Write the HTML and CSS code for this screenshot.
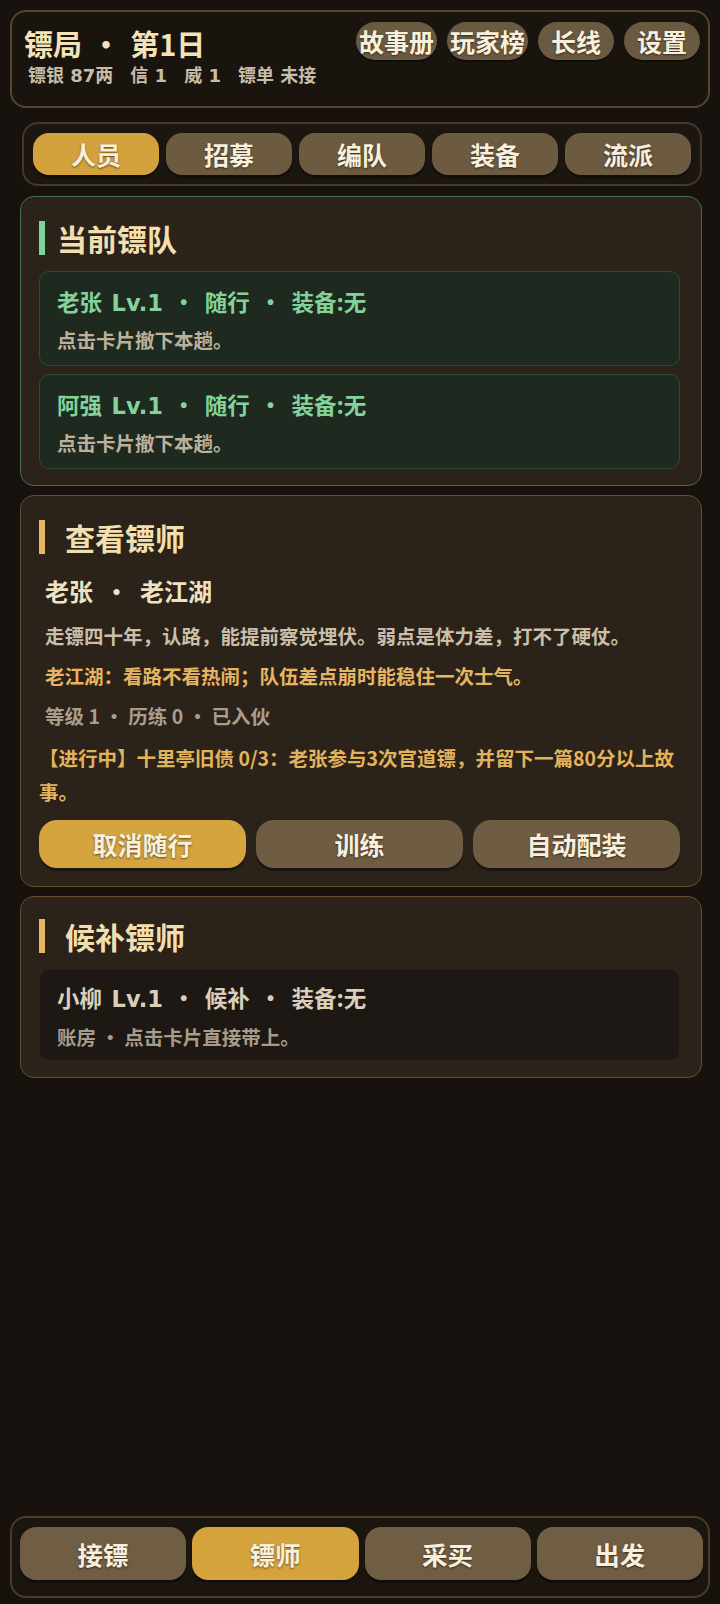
FILE: index.html
```html
<!DOCTYPE html>
<html lang="zh-CN">
<head>
  <meta charset="UTF-8" />
  <meta name="viewport" content="width=device-width, initial-scale=1.0"/>
  <title>镖局</title>
  <link rel="stylesheet" href="styles.css">
</head>
<body>
  <div class="app">
    <header class="topbar">
      <div class="brand">
        <h1>镖局 · 第1日</h1>
        <div class="stats">
          <span>镖银 87两</span>
          <span>信 1</span>
          <span>威 1</span>
          <span>镖单 未接</span>
        </div>
      </div>
      <nav class="top-actions">
        <button class="tight">故事册</button>
        <button class="tight">玩家榜</button>
        <button>长线</button>
        <button>设置</button>
      </nav>
    </header>

    <main>
      <div class="tabs">
        <button class="tab active">人员</button>
        <button class="tab">招募</button>
        <button class="tab">编队</button>
        <button class="tab">装备</button>
        <button class="tab">流派</button>
      </div>

      <section class="panel panel-green">
        <h2 class="panel-title">当前镖队</h2>
        <div class="crew crew-on">
          <p class="crew-name">老张 <span class="lv">Lv.1</span> · 随行 · 装备:无</p>
          <p class="crew-hint">点击卡片撤下本趟。</p>
        </div>
        <div class="crew crew-on">
          <p class="crew-name">阿强 <span class="lv">Lv.1</span> · 随行 · 装备:无</p>
          <p class="crew-hint">点击卡片撤下本趟。</p>
        </div>
      </section>

      <section class="panel panel-detail">
        <h2 class="panel-title gold">查看镖师</h2>
        <div class="detail">
          <h3>老张 · 老江湖</h3>
          <p class="desc">走镖四十年，认路，能提前察觉埋伏。弱点是体力差，打不了硬仗。</p>
          <p class="trait">老江湖：看路不看热闹；队伍差点崩时能稳住一次士气。</p>
          <p class="meta">等级 1 · 历练 0 · 已入伙</p>
          <p class="quest">【进行中】十里亭旧债 0/3：老张参与3次官道镖，并留下一篇80分以上故事。</p>
        </div>
        <div class="actions">
          <button class="btn primary">取消随行</button>
          <button class="btn">训练</button>
          <button class="btn">自动配装</button>
        </div>
      </section>

      <section class="panel panel-bench">
        <h2 class="panel-title gold">候补镖师</h2>
        <div class="crew crew-off">
          <p class="crew-name">小柳 <span class="lv">Lv.1</span> · 候补 · 装备:无</p>
          <p class="crew-hint">账房 · 点击卡片直接带上。</p>
        </div>
      </section>
    </main>

    <footer class="bottom-nav">
      <button class="nav-btn">接镖</button>
      <button class="nav-btn active">镖师</button>
      <button class="nav-btn">采买</button>
      <button class="nav-btn">出发</button>
    </footer>
  </div>
</body>
</html>
```

FILE: styles.css
```css
* {
  box-sizing: border-box;
}
body {
  margin: 0;
  background: #17120e;
  color: #f0e2c0;
  font-family: "Noto Sans CJK SC", "Noto Sans", sans-serif;
  font-weight: 700;
}
button {
  font-family: inherit;
  font-weight: 700;
  border: none;
  cursor: pointer;
  color: #f8efdc;
  text-shadow: 0 1px 2px rgba(0,0,0,0.55);
}
p, h1, h2, h3 {
  margin: 0;
}
.app {
  display: flex;
  flex-direction: column;
  min-height: 100vh;
  padding: 10px 10px 6px;
}

/* top bar */
.topbar {
  display: flex;
  justify-content: space-between;
  align-items: flex-start;
  height: 98px;
  padding: 10px 8px 0 12px;
  background: #1a140f;
  border: 2px solid #554530;
  border-radius: 16px;
}
.brand h1 {
  margin-top: 4px;
  font-size: 29px;
  line-height: 34px;
  word-spacing: 3px;
  color: #f4e3b9;
}
.stats {
  display: flex;
  gap: 17px;
  margin-top: 5px;
  padding-left: 4px;
  font-family: "DejaVu Sans", "Noto Sans CJK SC", sans-serif;
  font-size: 18px;
  line-height: 22px;
  color: #c8bda9;
}
.top-actions {
  display: flex;
  gap: 10px;
}
.top-actions button {
  height: 38px;
  padding: 0 13px;
  white-space: nowrap;
  font-size: 25px;
  border-radius: 19px;
  background: #6b5a42;
  box-shadow: 0 2px 0 rgba(0,0,0,0.35);
}
.top-actions button.tight {
  padding: 0 3px;
}

main {
  flex: 1;
  padding: 14px 8px 0 10px;
}

/* tabs */
.tabs {
  display: flex;
  gap: 7px;
  margin: 0 0 10px 2px;
  padding: 9px;
  background: #1c1611;
  border: 2px solid #45372a;
  border-radius: 16px;
}
.tab {
  flex: 1;
  height: 42px;
  font-size: 25px;
  border-radius: 16px;
  background: #6c5a41;
  box-shadow: 0 3px 0 rgba(0,0,0,0.35);
}
.tab.active {
  background: #d4a23c;
}

/* panels */
.panel {
  margin-bottom: 9px;
  padding: 24px 21px 18px 18px;
  background: #2b2219;
  border: 1.5px solid #644f31;
  border-radius: 14px;
}
.panel-green {
  padding-bottom: 16px;
  border-color: #44704e;
}
.panel-detail {
  padding-bottom: 18px;
}
.panel-bench {
  padding-top: 22px;
  padding-bottom: 16px;
}
.panel-title {
  height: 34px;
  margin-bottom: 16px;
  padding-left: 12px;
  font-size: 30px;
  line-height: 34px;
  color: #f2dfb0;
  border-left: 6px solid #7fd39a;
}
.panel-title.gold {
  padding-left: 20px;
  border-left-color: #e6b866;
}

.crew {
  padding: 14px 17px 13px;
  border-radius: 10px;
  border: 1.5px solid #2f4a36;
  background: #1e2a1f;
}
.crew + .crew {
  margin-top: 8px;
}
.crew-name {
  font-size: 22.5px;
  line-height: 30px;
  word-spacing: 4.5px;
  color: #82d29a;
}
.lv {
  font-family: "DejaVu Sans", sans-serif;
}
.crew-hint {
  margin-top: 10px;
  font-size: 19.5px;
  line-height: 24px;
  color: #bdb19c;
}
.crew-off {
  padding-top: 12px;
  padding-bottom: 11px;
  background: #1d1814;
  border-color: #2c241c;
}
.crew-off .crew-name {
  color: #d9cfbb;
}
.crew-off .crew-hint {
  margin-top: 11px;
  color: #a79c89;
}

/* detail */
.detail {
  padding-top: 4px;
}
.detail h3 {
  margin-bottom: 11px;
  padding-left: 6px;
  font-size: 24px;
  line-height: 34px;
  word-spacing: 6px;
  color: #efe2c2;
}
.detail p {
  margin-bottom: 6px;
  padding-left: 6px;
  font-size: 19.5px;
  line-height: 34px;
}
.desc {
  color: #cabfaa;
}
.trait {
  color: #e6b563;
}
.detail .meta {
  margin-bottom: 8px;
  color: #a99e8c;
}
.detail .quest {
  padding-left: 0;
  color: #e3b35c;
}

.actions {
  display: flex;
  gap: 10px;
  margin-top: 11px;
}
.btn {
  flex: 1;
  height: 48px;
  font-size: 25px;
  border-radius: 18px;
  background: #6e5c43;
  box-shadow: 0 3px 0 rgba(0,0,0,0.35);
}
.btn.primary {
  background: #d4a43e;
}

/* bottom nav */
.bottom-nav {
  display: flex;
  gap: 6px;
  height: 82px;
  padding: 9px 5px 16px 8px;
  background: #1b150f;
  border: 2px solid #4a3b2a;
  border-radius: 16px;
}
.nav-btn {
  flex: 1;
  font-size: 25.5px;
  border-radius: 16px;
  background: #6f5d44;
  box-shadow: 0 3px 0 rgba(0,0,0,0.35);
}
.nav-btn.active {
  background: #d5a33b;
}
```
